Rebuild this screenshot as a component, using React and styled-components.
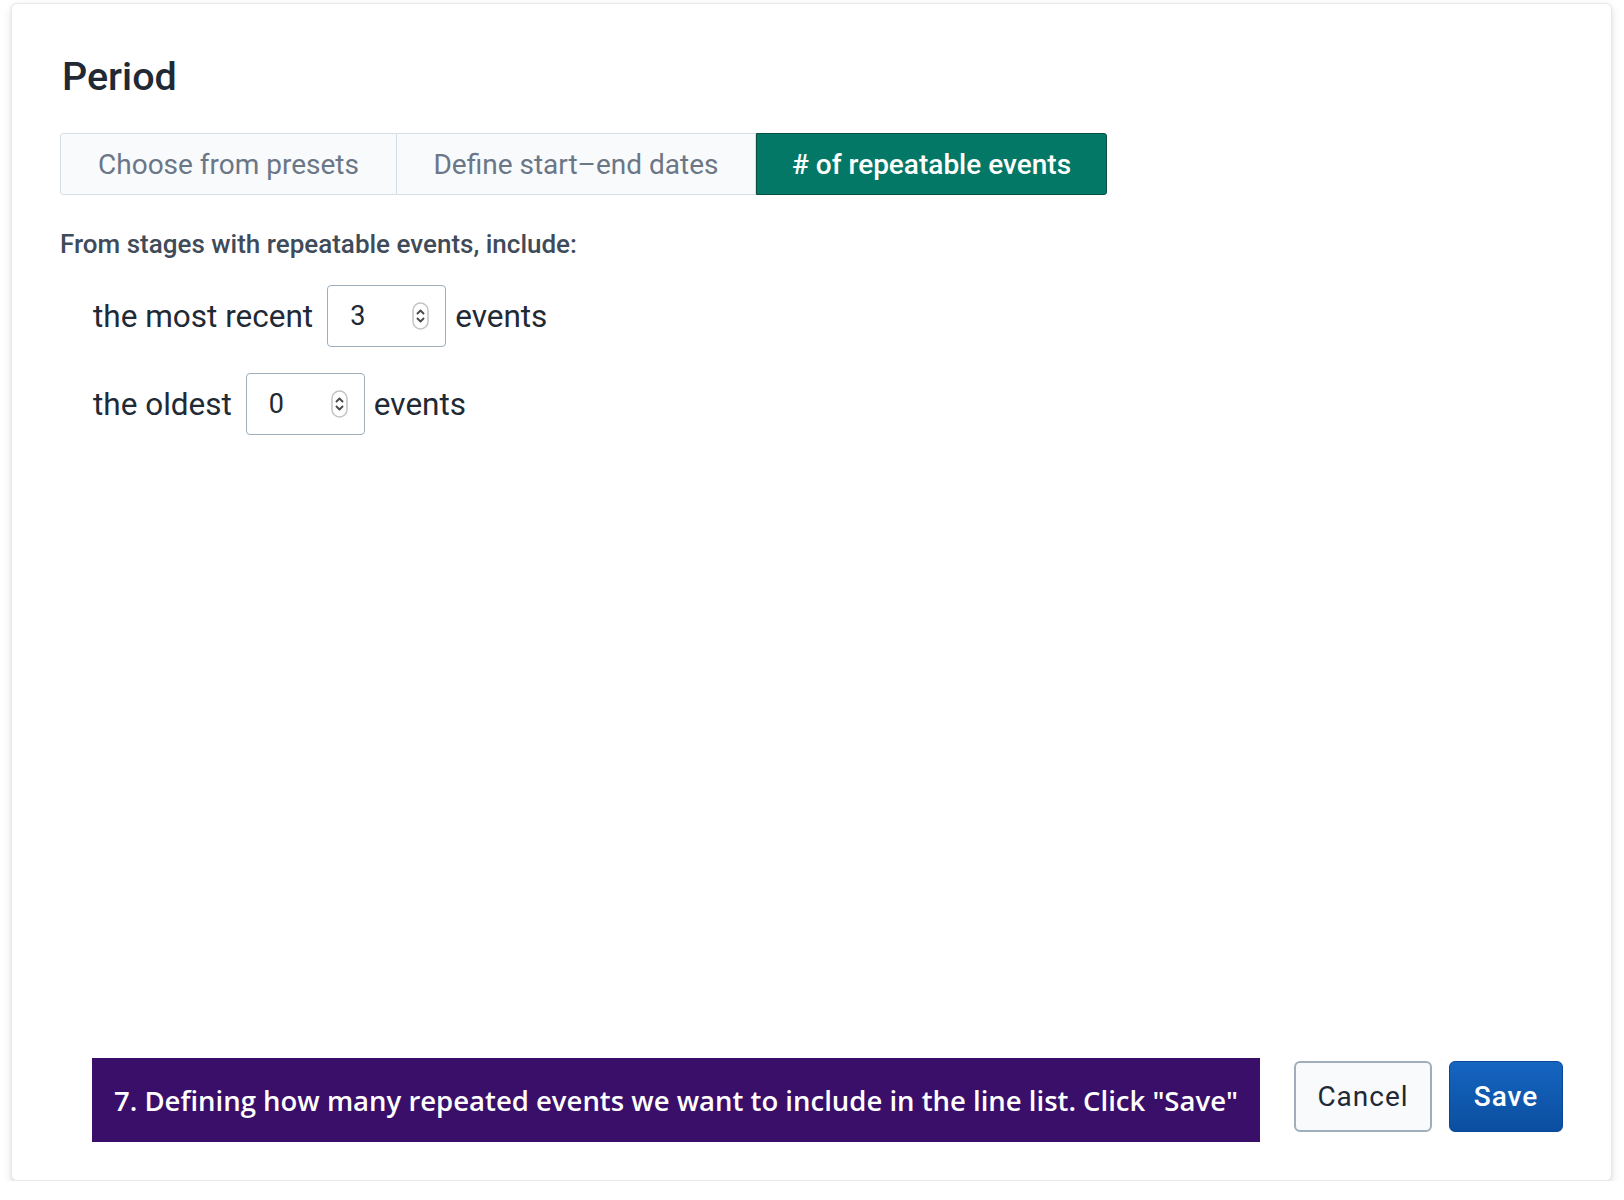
import React, {useState} from 'react';
import styled, {createGlobalStyle} from 'styled-components';

const GlobalStyle = createGlobalStyle`
  body {
    margin: 0;
    background: #ffffff;
    font-family: Roboto, "Liberation Sans", sans-serif;
    color: #212934;
  }
`

const Page = styled.div`
  padding: 3px 0 0 11px;
`

const Card = styled.div`
  box-sizing: border-box;
  width: 1601px;
  height: 1178px;
  background: #ffffff;
  border: 1px solid #e6eaef;
  border-radius: 6px;
  box-shadow: 0 4px 10px rgba(33, 41, 52, 0.12), 0 1px 3px rgba(33, 41, 52, 0.08);
  padding: 49px 48px 38px 48px;
  display: flex;
  flex-direction: column;
`

const Title = styled.h1`
  margin: 0 0 32px 2px;
  font-size: 39.5px;
  line-height: 48px;
  font-weight: 500;
  color: #212934;
`

const Segments = styled.div`
  display: flex;
  align-self: flex-start;
  height: 62px;
`

const Segment = styled.button`
  box-sizing: border-box;
  height: 62px;
  width: ${p => p.$w}px;
  font-family: Roboto, "Liberation Sans", sans-serif;
  font-size: 28px;
  font-weight: ${p => p.$active ? 500 : 400};
  color: ${p => p.$active ? '#ffffff' : '#6b7686'};
  background: ${p => p.$active ? '#047866' : '#f8fafc'};
  border: 1px solid ${p => p.$active ? '#0b4f43' : '#d5dde5'};
  border-left-width: ${p => p.$first || p.$active ? 1 : 0}px;
  padding: 0;
  cursor: pointer;
  &:first-child {
    border-radius: 3px 0 0 3px;
  }
  &:last-child {
    border-radius: 0 3px 3px 0;
  }
`

const Lead = styled.p`
  margin: 35px 0 27px 0;
  font-size: 26px;
  line-height: 28px;
  font-weight: 500;
  color: #404b5a;
`

const Rows = styled.div`
  display: flex;
  flex-direction: column;
  gap: 26px;
  padding-left: 33px;
`

const Row = styled.div`
  display: flex;
  align-items: center;
  height: 62px;
  font-size: 31.5px;
  color: #212934;
`

const Label = styled.span`
  margin-right: 14px;
`

const Unit = styled.span`
  margin-left: 9px;
`

const NumberBox = styled.div`
  box-sizing: border-box;
  width: 119px;
  height: 62px;
  border: 1px solid #a0adba;
  border-radius: 4px;
  display: flex;
  align-items: center;
  justify-content: space-between;
  padding: 0 16px 0 22px;
  background: #ffffff;
`

const NumberInput = styled.input`
  border: none;
  outline: none;
  width: 50px;
  padding: 0;
  font-family: Roboto, "Liberation Sans", sans-serif;
  font-size: 27px;
  color: #212934;
  background: transparent;
`

const Footer = styled.div`
  margin-top: auto;
  display: flex;
  align-items: center;
  padding-left: 32px;
`

const Banner = styled.div`
  flex: 1;
  height: 84px;
  margin-right: 34px;
  margin-top: 8px;
  background: #3a0f6a;
  color: #ffffff;
  display: flex;
  align-items: center;
  justify-content: center;
  font-family: "Open Sans", "Noto Sans", sans-serif;
  font-weight: 600;
  font-size: 27.5px;
`

const Button = styled.button`
  box-sizing: border-box;
  height: 71px;
  width: ${p => p.$w}px;
  border-radius: 6px;
  font-family: Roboto, "Liberation Sans", sans-serif;
  font-size: 28px;
  letter-spacing: 1px;
  font-weight: ${p => p.$primary ? 500 : 400};
  color: ${p => p.$primary ? '#ffffff' : '#212934'};
  background: ${p => p.$primary ? 'linear-gradient(180deg, #1565c0 0%, #0b4ea0 100%)' : '#f8fafc'};
  border: ${p => p.$primary ? '1px solid #0a469a' : '2px solid #a0adba'};
  cursor: pointer;
  & + & {
    margin-left: 17px;
  }
`

const Spinner = () => (
    <svg width="17" height="28" viewBox="0 0 17 28">
        <rect x="1" y="1" width="15" height="26" rx="7.5" fill="#fff" stroke="#c4c4c4" strokeWidth="1.5"/>
        <path d="M5.5 11.5 L8.5 8.5 L11.5 11.5" fill="none" stroke="#4a4a4a" strokeWidth="1.9" strokeLinecap="round" strokeLinejoin="round"/>
        <path d="M5.5 16.5 L8.5 19.5 L11.5 16.5" fill="none" stroke="#4a4a4a" strokeWidth="1.9" strokeLinecap="round" strokeLinejoin="round"/>
    </svg>
)

const tabs = [
    {id: 'presets', label: 'Choose from presets', w: 337},
    {id: 'dates', label: 'Define start\u2013end dates', w: 359},
    {id: 'events', label: '# of repeatable events', w: 351},
]

function App() {
    const [tab, setTab] = useState('events')
    const [recent, setRecent] = useState('3')
    const [oldest, setOldest] = useState('0')

    return (
        <Page>
            <GlobalStyle/>
            <Card>
                <Title>Period</Title>
                <Segments>
                    {tabs.map((t, i) => (
                        <Segment key={t.id} $w={t.w} $first={i === 0} $active={tab === t.id}
                                 onClick={() => setTab(t.id)}>
                            {t.label}
                        </Segment>
                    ))}
                </Segments>
                <Lead>From stages with repeatable events, include:</Lead>
                <Rows>
                    <Row>
                        <Label>the most recent</Label>
                        <NumberBox>
                            <NumberInput value={recent} onChange={e => setRecent(e.target.value)}/>
                            <Spinner/>
                        </NumberBox>
                        <Unit>events</Unit>
                    </Row>
                    <Row>
                        <Label>the oldest</Label>
                        <NumberBox>
                            <NumberInput value={oldest} onChange={e => setOldest(e.target.value)}/>
                            <Spinner/>
                        </NumberBox>
                        <Unit>events</Unit>
                    </Row>
                </Rows>
                <Footer>
                    <Banner>7. Defining how many repeated events we want to include in the line list. Click "Save"</Banner>
                    <Button $w={138}>Cancel</Button>
                    <Button $w={114} $primary>Save</Button>
                </Footer>
            </Card>
        </Page>
    );
}

export default App;
